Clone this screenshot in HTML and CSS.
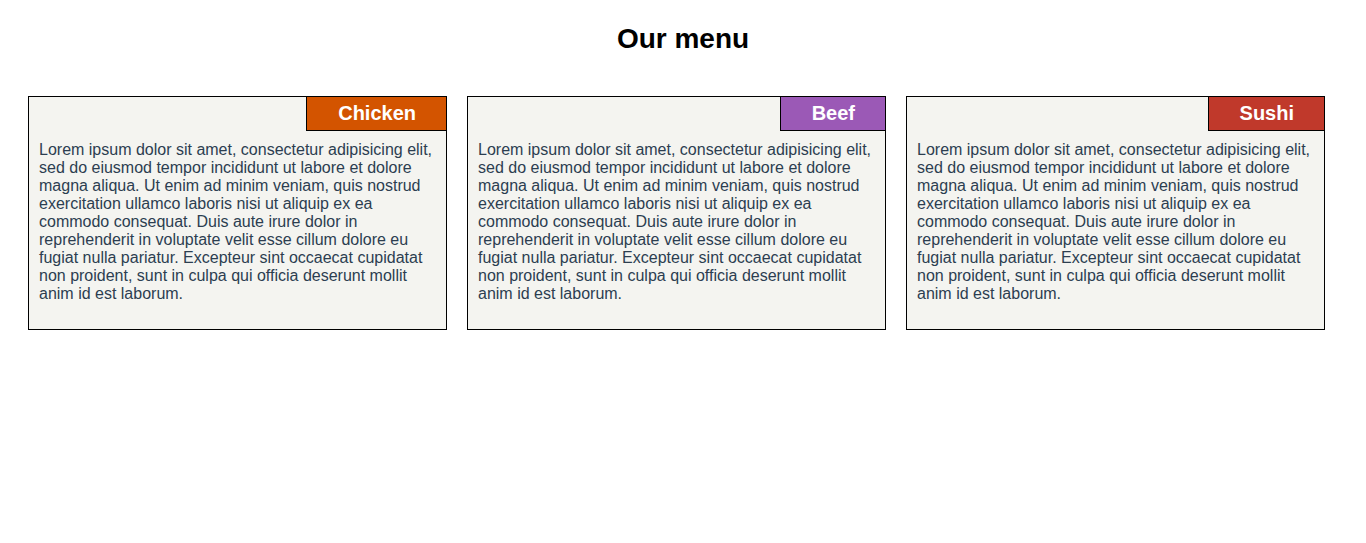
FILE: index.html
```html
<!DOCTYPE html>
<html lang="en">
<head>
<meta charset="utf-8">
<title>Our menu</title>
<link rel="stylesheet" href="styles.css">
</head>
<body>
<main class="page">
  <h1 class="title">Our menu</h1>
  <section class="menu">
    <article class="card">
      <div class="card-head"><span class="badge badge-chicken">Chicken</span></div>
      <p class="card-text">Lorem ipsum dolor sit amet, consectetur adipisicing elit, sed do eiusmod tempor incididunt ut labore et dolore magna aliqua. Ut enim ad minim veniam, quis nostrud exercitation ullamco laboris nisi ut aliquip ex ea commodo consequat. Duis aute irure dolor in reprehenderit in voluptate velit esse cillum dolore eu fugiat nulla pariatur. Excepteur sint occaecat cupidatat non proident, sunt in culpa qui officia deserunt mollit anim id est laborum.</p>
    </article>
    <article class="card">
      <div class="card-head"><span class="badge badge-beef">Beef</span></div>
      <p class="card-text">Lorem ipsum dolor sit amet, consectetur adipisicing elit, sed do eiusmod tempor incididunt ut labore et dolore magna aliqua. Ut enim ad minim veniam, quis nostrud exercitation ullamco laboris nisi ut aliquip ex ea commodo consequat. Duis aute irure dolor in reprehenderit in voluptate velit esse cillum dolore eu fugiat nulla pariatur. Excepteur sint occaecat cupidatat non proident, sunt in culpa qui officia deserunt mollit anim id est laborum.</p>
    </article>
    <article class="card">
      <div class="card-head"><span class="badge badge-sushi">Sushi</span></div>
      <p class="card-text">Lorem ipsum dolor sit amet, consectetur adipisicing elit, sed do eiusmod tempor incididunt ut labore et dolore magna aliqua. Ut enim ad minim veniam, quis nostrud exercitation ullamco laboris nisi ut aliquip ex ea commodo consequat. Duis aute irure dolor in reprehenderit in voluptate velit esse cillum dolore eu fugiat nulla pariatur. Excepteur sint occaecat cupidatat non proident, sunt in culpa qui officia deserunt mollit anim id est laborum.</p>
    </article>
  </section>
</main>
</body>
</html>
```
FILE: styles.css
```css
html, body {
  margin: 0;
  padding: 0;
  background: #ffffff;
}

body {
  font-family: "Liberation Sans", Arial, sans-serif;
}

.page {
  padding-top: 23px;
}

.title {
  margin: 0;
  font-size: 28px;
  line-height: 32px;
  font-weight: bold;
  text-align: center;
  color: #000000;
}

.menu {
  display: grid;
  grid-template-columns: repeat(3, 419px);
  column-gap: 20px;
  padding-left: 28px;
  margin-top: 41px;
}

.card {
  box-sizing: border-box;
  border: 1px solid #000000;
  background: #f4f4f0;
  display: flex;
  flex-direction: column;
}

.card-head {
  display: flex;
  justify-content: flex-end;
}

.badge {
  margin: -1px -1px 0 0;
  padding: 5px 30px 5px 31px;
  border: 1px solid #000000;
  color: #ffffff;
  font-size: 20px;
  line-height: 23px;
  font-weight: bold;
}

.badge-chicken { background: #d35400; }
.badge-beef { background: #9b59b6; }
.badge-sushi { background: #c0392b; }

.card-text {
  margin: 0;
  padding: 10px 10px 26px;
  font-size: 16px;
  line-height: 18px;
  color: #2c3e50;
}
```
